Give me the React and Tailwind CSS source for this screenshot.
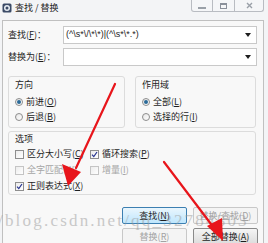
import React from "react";

const font = { fontFamily: '"Noto Sans CJK SC", "Liberation Sans", sans-serif' };

function Radio({ checked, children }) {
  return (
    <div className="flex items-center h-[15px] gap-[3px]">
      <span className="w-[8px] h-[8px] rounded-full border border-[#8d8d8d] bg-gradient-to-br from-[#e6e6e6] to-[#ffffff] flex items-center justify-center">
        {checked && <span className="w-[4px] h-[4px] rounded-full bg-[#2a6a98]" />}
      </span>
      <span className="text-[9px] leading-[15px] text-[#1e1e1e]">{children}</span>
    </div>
  );
}

function Check({ checked, disabled, children }) {
  return (
    <div className="flex items-center h-[16px] gap-[3px]">
      <span
        className={
          "w-[9px] h-[9px] border flex items-center justify-center bg-gradient-to-br from-[#ececec] to-[#ffffff] " +
          (disabled ? "border-[#c4c4c4]" : "border-[#8e8e8e]")
        }
      >
        {checked && (
          <svg width="7" height="7" viewBox="0 0 7 7">
            <path d="M1 3.6 L2.8 5.6 L6 1" fill="none" stroke="#27348f" strokeWidth="1.2" />
          </svg>
        )}
      </span>
      <span className={"text-[9px] leading-[16px] " + (disabled ? "text-[#a6a6a6]" : "text-[#1e1e1e]")}>
        {children}
      </span>
    </div>
  );
}

function Combo({ text }) {
  return (
    <div className="flex-1 h-[18px] border border-[#c9c9c9] bg-white flex items-center justify-between pl-[2px] pr-[5px]">
      <span className="text-[9px] text-[#1e1e1e] whitespace-nowrap" style={{ fontFamily: '"Liberation Sans", sans-serif' }}>
        {text}
      </span>
      <svg width="6" height="4" viewBox="0 0 6 4">
        <path d="M0 0 H6 L3 4 Z" fill="#1e1e1e" />
      </svg>
    </div>
  );
}

function Btn({ children, variant }) {
  const cls =
    variant === "default"
      ? "border-[#3c7fb1] bg-gradient-to-b from-[#eaf6fd] to-[#bee6fd] text-[#1e1e1e]"
      : variant === "disabled"
      ? "border-[#c8c8c8] bg-[#f4f4f4] text-[#a3a3a3]"
      : "border-[#8a8a8a] bg-gradient-to-b from-[#f5f5f5] to-[#dcdcdc] text-[#1e1e1e]";
  return (
    <div className={"h-[17px] rounded-[2px] border flex items-center justify-center text-[9px] " + cls}>
      {children}
    </div>
  );
}

export default function App() {
  return (
    <div className="w-[268px] h-[243px] relative overflow-hidden bg-[#f3f4f6]" style={font}>
      {/* title bar */}
      <div className="h-[20px] flex justify-between items-start">
        <div className="flex items-center gap-[3px] pl-[2px] pt-[2px]">
          <svg width="10" height="10" viewBox="0 0 10 10">
            <rect x="0.5" y="0.5" width="9" height="9" rx="1.5" fill="#3b4a67" />
            <circle cx="5" cy="5" r="3" fill="#e8eef5" />
            <circle cx="5" cy="5" r="1.5" fill="#3b4a67" />
          </svg>
          <span className="text-[9px] leading-[12px] text-[#1e1e1e]">查找 / 替换</span>
        </div>
        <div className="mr-[4px] flex h-[12px] border border-t-0 border-[#b9bcc2] rounded-b-[3px] bg-[#f5f6f8]">
          <div className="w-[21px] flex items-center justify-center border-r border-[#b9bcc2]">
            <span className="w-[8px] h-[2px] border border-[#9aa0a8] mt-[4px]" />
          </div>
          <div className="w-[22px] flex items-center justify-center border-r border-[#b9bcc2]">
            <span className="w-[7px] h-[6px] border border-[#8a909a] border-t-2" />
          </div>
          <div className="w-[28px] flex items-center justify-center">
            <svg width="7" height="7" viewBox="0 0 7 7">
              <path d="M1 1 L6 6 M6 1 L1 6" stroke="#9aa0a8" strokeWidth="1.4" />
            </svg>
          </div>
        </div>
      </div>

      {/* panel */}
      <div className="ml-[2px] mr-[4px] h-[223px] border-t border-l border-r border-[#c0c0c0] bg-[#f8f8f8] pl-[5px] pr-[6px] pt-[5px]">
        <div className="flex items-center">
          <span className="w-[55px] text-[9px] text-[#1e1e1e]">
            查找(<u>F</u>)：
          </span>
          <Combo text={"(^\\s*\\/\\*\\*)|(^\\s*\\*.*)"} />
        </div>
        <div className="flex items-center mt-[4px]">
          <span className="w-[55px] text-[9px] text-[#1e1e1e]">
            替换为(<u>E</u>)：
          </span>
          <Combo text="" />
        </div>

        <div className="flex gap-[10px] mt-[10px] pr-[1px]">
          <div className="w-[117px] h-[52px] border border-[#dcdcdc] rounded-[3px] pl-[6px] pt-[1px]">
            <div className="text-[9px] leading-[13px] text-[#1e1e1e]">方向</div>
            <div className="mt-[3px]">
              <Radio checked>
                前进(<u>O</u>)
              </Radio>
              <Radio>
                后退(<u>B</u>)
              </Radio>
            </div>
          </div>
          <div className="flex-1 h-[52px] border border-[#dcdcdc] rounded-[3px] pl-[6px] pt-[1px]">
            <div className="text-[9px] leading-[13px] text-[#1e1e1e]">作用域</div>
            <div className="mt-[3px]">
              <Radio checked>
                全部(<u>L</u>)
              </Radio>
              <Radio>
                选择的行(<u>I</u>)
              </Radio>
            </div>
          </div>
        </div>

        <div className="mt-[3px] mr-[1px] h-[64px] border border-[#dcdcdc] rounded-[3px] pl-[6px]">
          <div className="text-[9px] leading-[13px] text-[#1e1e1e]">选项</div>
          <div className="grid grid-cols-[75px_1fr] mt-[1px]">
            <Check>
              区分大小写(<u>C</u>)
            </Check>
            <Check checked>
              循环搜索(<u>P</u>)
            </Check>
            <Check disabled>
              全字匹配(<u>W</u>)
            </Check>
            <Check disabled>
              增量(<u>I</u>)
            </Check>
            <Check checked>
              正则表达式(<u>X</u>)
            </Check>
          </div>
        </div>

        <div className="mt-[12px] ml-[114px] grid grid-cols-2 gap-x-[6px] gap-y-[4px] w-[136px]">
          <Btn variant="default">
            查找(<u>N</u>)
          </Btn>
          <Btn variant="disabled">
            替换/查找(<u>D</u>)
          </Btn>
          <Btn variant="disabled">
            替换(<u>R</u>)
          </Btn>
          <Btn>
            全部替换(<u>A</u>)
          </Btn>
        </div>
      </div>

      {/* watermark */}
      <div
        className="absolute left-[-2px] top-[211px] text-[17px] leading-[20px] tracking-[2.2px] text-[#9a9a9a] opacity-50 whitespace-nowrap pointer-events-none"
        style={{ fontFamily: '"Liberation Serif", serif' }}
      >
        /blog.csdn.net/qq_32784303
      </div>

      {/* red arrows */}
      <svg className="absolute left-0 top-0 pointer-events-none" width="268" height="243" viewBox="0 0 268 243">
        <path d="M115 84 L76 168" stroke="#e8151b" strokeWidth="2.2" strokeLinecap="round" />
        <path d="M68 186 L62 164 L81 172 Z" fill="#e8151b" />
        <path d="M164 162 L214 228" stroke="#e8151b" strokeWidth="2.2" strokeLinecap="round" />
        <path d="M223 241 L207 226 L222 218 Z" fill="#e8151b" />
      </svg>
    </div>
  );
}
